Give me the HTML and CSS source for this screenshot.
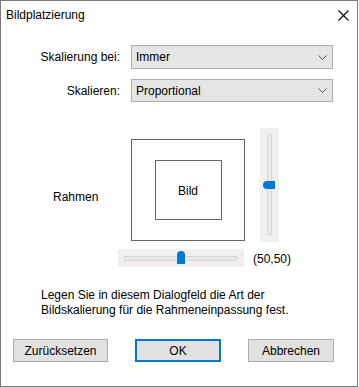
FILE: index.html
```html
<!DOCTYPE html>
<html>
<head>
<meta charset="utf-8">
<link rel="stylesheet" href="styles.css">
</head>
<body>
<div class="window">
  <div class="titlebar">
    <span class="title">Bildplatzierung</span>
    <svg class="close" width="11" height="11" viewBox="0 0 11 11"><path d="M0.5 0.5L10.5 10.5M10.5 0.5L0.5 10.5" stroke="#000" stroke-width="1.1" fill="none"/></svg>
  </div>
  <div class="form">
    <label class="lbl">Skalierung bei:</label>
    <div class="combo c1"><span>Immer</span><svg width="9" height="5" viewBox="0 0 9 5"><path d="M0.5 0.5L4.5 4.5L8.5 0.5" stroke="#555" fill="none"/></svg></div>
    <label class="lbl">Skalieren:</label>
    <div class="combo c2"><span>Proportional</span><svg width="9" height="5" viewBox="0 0 9 5"><path d="M0.5 0.5L4.5 4.5L8.5 0.5" stroke="#555" fill="none"/></svg></div>
  </div>
  <div class="placement">
    <div class="rahmen">Rahmen</div>
    <div class="pane">
      <div class="rowA">
        <div class="frame"><div class="inner">Bild</div></div>
        <div class="vslider"><div class="vtrack"></div><div class="vthumb"></div></div>
      </div>
      <div class="rowB">
        <div class="hslider"><div class="htrack"></div><div class="hthumb"></div></div>
        <span class="coords">(50,50)</span>
      </div>
    </div>
  </div>
  <p class="desc">Legen Sie in diesem Dialogfeld die Art der<br>Bildskalierung für die Rahmeneinpassung fest.</p>
  <div class="buttons">
    <button class="btn reset">Zurücksetzen</button>
    <button class="btn ok">OK</button>
    <button class="btn cancel">Abbrechen</button>
  </div>
</div>
</body>
</html>
```
FILE: styles.css
```css
* { box-sizing: border-box; }
html, body { margin: 0; padding: 0; background: #fff; }
body { font-family: "Liberation Sans", Arial, sans-serif; font-size: 12px; color: #000; }
.window {
  width: 358px; height: 387px;
  border: 1px solid #7a7a7a;
  background: #fff;
  display: flex; flex-direction: column;
}
.titlebar {
  height: 28px;
  display: flex; align-items: center; justify-content: space-between;
  padding: 0 8px 0 5px;
}
.title { font-size: 12px; }
.close { display: block; margin-top: 0; }
.form {
  margin-top: 16px;
  display: grid;
  grid-template-columns: 119px 202px;
  column-gap: 11px;
  row-gap: 10px;
  align-items: center;
}
.lbl { text-align: right; }
.combo {
  background: #e5e5e5; border: 1px solid #adadad;
  display: flex; align-items: center; justify-content: space-between;
  padding: 0 5px 0 4px;
}
.c1 { height: 24px; }
.c2 { height: 23px; }
.placement { display: flex; margin-top: 26px; }
.rahmen { width: 117px; padding-left: 52px; padding-top: 62px; }
.pane { display: flex; flex-direction: column; gap: 7px; }
.rowA { display: flex; align-items: flex-start; }
.frame {
  margin-left: 13px; margin-top: 11px;
  width: 114px; height: 102px;
  border: 1px solid #646464;
  display: flex; align-items: center; justify-content: center;
}
.inner {
  width: 67px; height: 60px;
  border: 1px solid #646464;
  display: flex; align-items: center; justify-content: center;
  padding-top: 2px;
}
.vslider {
  margin-left: 15px;
  width: 19px; height: 114px; background: #f0f0f0;
  position: relative;
}
.vtrack {
  position: absolute; left: 7px; top: 6px; width: 5px; height: 101px;
  background: #e7eaea; border: 1px solid #d6d6d6;
}
.vthumb {
  position: absolute; left: 3px; top: 53px; width: 12px; height: 8px;
  background: #0078d7; border-radius: 4px 0 0 4px;
}
.rowB { display: flex; align-items: center; gap: 9px; }
.hslider {
  width: 126px; height: 18px; background: #f0f0f0; position: relative;
}
.htrack {
  position: absolute; left: 6px; top: 7px; width: 113px; height: 5px;
  background: #e7eaea; border: 1px solid #d6d6d6;
}
.hthumb {
  position: absolute; left: 59px; top: 2px; width: 8px; height: 13px;
  background: #0078d7; border-radius: 4px 4px 0 0;
}
.coords { padding-top: 1px; }
.desc { margin: 21px 0 0 40px; line-height: 15px; }
.buttons {
  margin-top: 21px;
  display: flex; padding: 0 23px 0 12px; justify-content: space-between;
}
.btn {
  font-family: inherit; font-size: 12px; color: #000;
  height: 23px; background: #e1e1e1; border: 1px solid #adadad;
  padding: 0; margin: 0;
}
.reset { width: 95px; }
.ok { width: 86px; border: 2px solid #0078d7; }
.cancel { width: 86px; }
```
